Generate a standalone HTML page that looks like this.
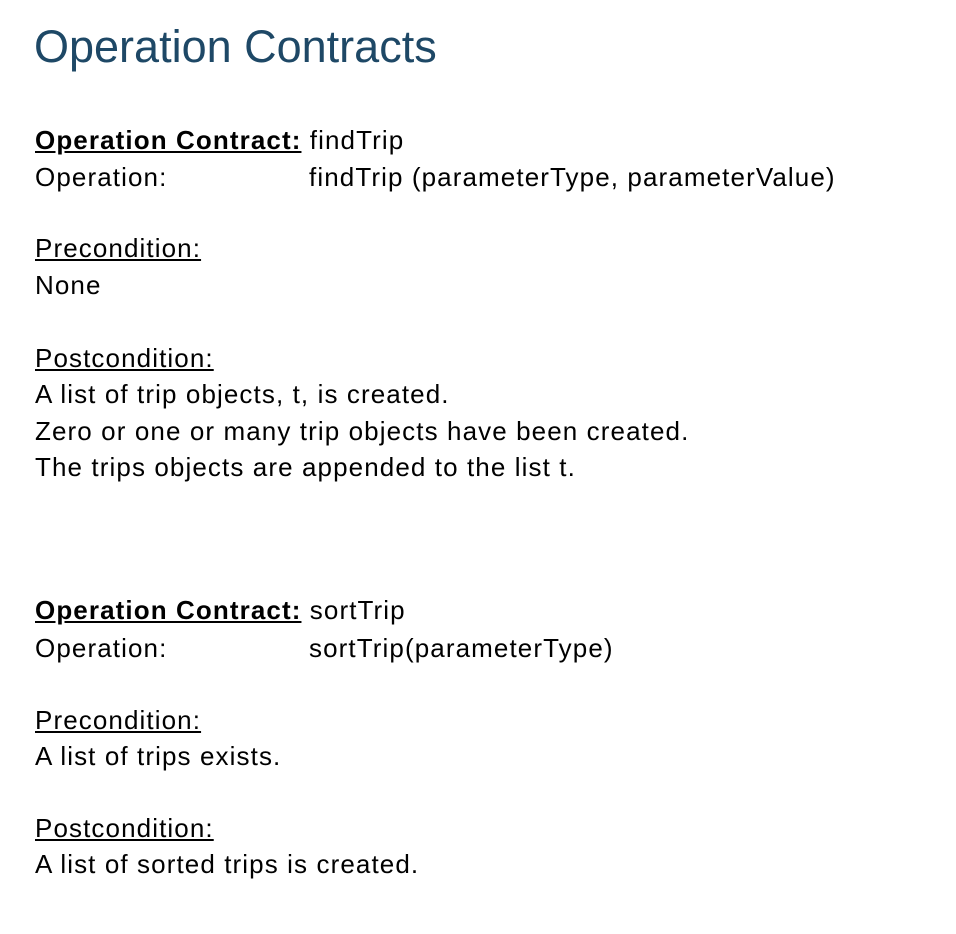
<!DOCTYPE html>
<html><head><meta charset="utf-8"><style>
body{margin:0;background:#fff;width:956px;height:934px;position:relative;font-family:"Liberation Sans",sans-serif;color:#000;}
.t{position:absolute;left:34px;top:21px;font-size:45px;color:#1e4866;line-height:52px;white-space:nowrap;}
.l{position:absolute;left:35px;font-size:26px;line-height:30px;white-space:nowrap;letter-spacing:1.1px;}
.b{font-weight:bold;text-decoration:underline;}
.u{text-decoration:underline;}
.c{position:absolute;left:274px;}
</style></head><body>
<div class="t">Operation Contracts</div>
<div class="l" style="top:125px"><span class="b">Operation Contract:</span> findTrip</div>
<div class="l" style="top:162px">Operation:<span class="c">findTrip (parameterType, parameterValue)</span></div>
<div class="l u" style="top:233px">Precondition:</div>
<div class="l" style="top:270px">None</div>
<div class="l u" style="top:343px">Postcondition:</div>
<div class="l" style="top:379px">A list of trip objects, t, is created.</div>
<div class="l" style="top:416px">Zero or one or many trip objects have been created.</div>
<div class="l" style="top:452px">The trips objects are appended to the list t.</div>
<div class="l" style="top:595px"><span class="b">Operation Contract:</span> sortTrip</div>
<div class="l" style="top:633px">Operation:<span class="c">sortTrip(parameterType)</span></div>
<div class="l u" style="top:705px">Precondition:</div>
<div class="l" style="top:741px">A list of trips exists.</div>
<div class="l u" style="top:813px">Postcondition:</div>
<div class="l" style="top:849px">A list of sorted trips is created.</div>
</body></html>
